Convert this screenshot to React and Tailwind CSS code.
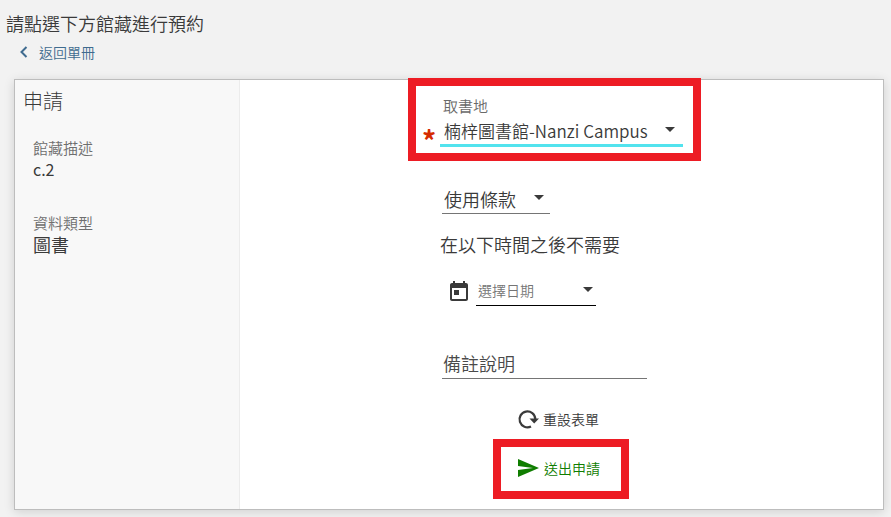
import React, { useState } from "react";

const FONT = "font-['Noto_Sans_CJK_TC',sans-serif]";

const DETAILS = [
  { label: "館藏描述", value: "c.2", size: "text-[16px]" },
  { label: "資料類型", value: "圖書", size: "text-[18px]" },
];

function Caret({ className }) {
  return (
    <svg viewBox="0 0 10 5" className={`pointer-events-none absolute h-[5px] w-2.5 fill-[#3a3a3a] ${className}`} aria-hidden="true">
      <path d="M0 0h10L5 5z" />
    </svg>
  );
}

function Icon({ d, children }) {
  return (
    <svg viewBox="0 0 24 24" className="size-6 shrink-0 fill-current" aria-hidden="true">
      <path d={d} />
      {children}
    </svg>
  );
}

function Sidebar() {
  return (
    <aside className="w-[225px] shrink-0 border-r border-[#ececec] bg-[#f8f8f8] pt-1.5 pl-2">
      <h2 className="text-[20px] leading-[30px] font-light">申請</h2>
      <dl className="mt-[21px] space-y-8 pl-2.5">
        {DETAILS.map((item) => (
          <div key={item.label}>
            <dt className="text-[15px] leading-[22px] text-[#6e6e6e]">{item.label}</dt>
            <dd className={`leading-[21px] font-normal ${item.size}`}>{item.value}</dd>
          </div>
        ))}
      </dl>
    </aside>
  );
}

function RequestForm() {
  const [pickup, setPickup] = useState("nanzi");
  const [terms, setTerms] = useState("");
  const [date, setDate] = useState("");
  const [note, setNote] = useState("");

  const handleReset = () => {
    setPickup("nanzi");
    setTerms("");
    setDate("");
    setNote("");
  };

  return (
    <form
      onSubmit={(e) => e.preventDefault()}
      className="flex min-w-0 flex-1 flex-col items-start bg-white pb-2.5 pl-42"
    >
      {/* Pickup location */}
      <div className="-mt-0.5 flex w-[293px] border-8 border-[#ed1c24] pt-2.5 pr-2.5 pb-1.5 pl-1.5">
        <span className="w-[18px] self-end text-[28px] leading-3.5 font-bold text-[#d52b00]" aria-hidden="true">
          *
        </span>
        <div className="relative flex-1">
          <label htmlFor="pickup" className="block pl-[3px] text-[15px] leading-5 text-[#6a6a6a]">
            取書地
          </label>
          <select
            id="pickup"
            required
            value={pickup}
            onChange={(e) => setPickup(e.target.value)}
            className="block h-[31px] w-full appearance-none border-b-3 border-[#52e3ee] pt-0.5 pl-1 text-[17px] outline-none"
          >
            <option value="nanzi">楠梓圖書館-Nanzi Campus</option>
          </select>
          <Caret className="right-2 bottom-[15px]" />
        </div>
      </div>

      {/* Terms of use */}
      <div className="relative mt-6 ml-[34px] w-[108px]">
        <select
          aria-label="使用條款"
          value={terms}
          onChange={(e) => setTerms(e.target.value)}
          className="block h-[29px] w-full appearance-none border-b border-[#757575] pl-0.5 text-[18px] outline-none"
        >
          <option value="">使用條款</option>
        </select>
        <Caret className="right-1.5 bottom-3.5" />
      </div>

      {/* Not needed after */}
      <label htmlFor="date" className="mt-4 ml-8 text-[18px] leading-7">
        在以下時間之後不需要
      </label>
      <div className="mt-[19px] ml-[39px] flex items-center gap-[5px]">
        <Icon d="M19 3h-1V1h-2v2H8V1H6v2H5c-1.11 0-1.99.9-1.99 2L3 19c0 1.1.89 2 2 2h14c1.1 0 2-.9 2-2V5c0-1.1-.9-2-2-2zm0 16H5V8h14v11zM7 10h5v5H7z" />
        <div className="relative w-[120px]">
          <input
            id="date"
            type="text"
            placeholder="選擇日期"
            value={date}
            onChange={(e) => setDate(e.target.value)}
            className="block h-[29px] w-full border-b border-black pb-0.5 pl-0.5 text-[14px] outline-none placeholder:text-[#757575]"
          />
          <Caret className="right-[3px] bottom-3.5" />
        </div>
      </div>

      {/* Note */}
      <input
        type="text"
        aria-label="備註說明"
        placeholder="備註說明"
        value={note}
        onChange={(e) => setNote(e.target.value)}
        className="mt-11 ml-[34px] h-[29px] w-[205px] border-b border-[#757575] pb-0.5 pl-px text-[18px] outline-none placeholder:text-[#4a4a4a]"
      />

      {/* Actions */}
      <button
        type="button"
        onClick={handleReset}
        className="mt-[26px] ml-[107px] flex h-7 cursor-pointer items-center gap-1 text-[14px]"
      >
        <Icon d="M14.500 11.500h9.500L19.200 16.500z">
          <path d="M16 19.400A7.900 7.900 0 1 1 20.300 12" className="fill-none stroke-current stroke-[2.2]" />
        </Icon>
        重設表單
      </button>
      <div className="mt-1.5 ml-[85px] flex h-[60px] w-[136px] items-center border-8 border-[#ed1c24] pb-0.5 pl-[15px]">
        <button type="submit" className="flex cursor-pointer items-center gap-1 text-[14px] text-[#0f7d00]">
          <Icon d="M2.010 21L23 12 2.010 3 2 10l15 2-15 2z" />
          送出申請
        </button>
      </div>
    </form>
  );
}

export default function App() {
  return (
    <div className={`min-h-screen bg-[#f2f2f2] font-[350] text-[#3a3a3a] ${FONT}`}>
      <header className="pt-[9px] pl-1.5">
        <h1 className="text-[18px] leading-7">請點選下方館藏進行預約</h1>
        <a href="#items" className="ml-3 flex w-fit items-center gap-[9px] text-[14px] leading-[30px] text-[#3f6b8f]">
          <svg viewBox="0 0 12 12" className="size-3 fill-none stroke-current stroke-2" aria-hidden="true">
            <path d="M8.500 1L3.500 6l5 5" />
          </svg>
          返回單冊
        </a>
      </header>
      <main className="mt-3 mr-[7px] ml-3.5 flex border border-[#bdbdbd] shadow-[0_2px_10px_rgba(0,0,0,0.14)]">
        <Sidebar />
        <RequestForm />
      </main>
    </div>
  );
}
